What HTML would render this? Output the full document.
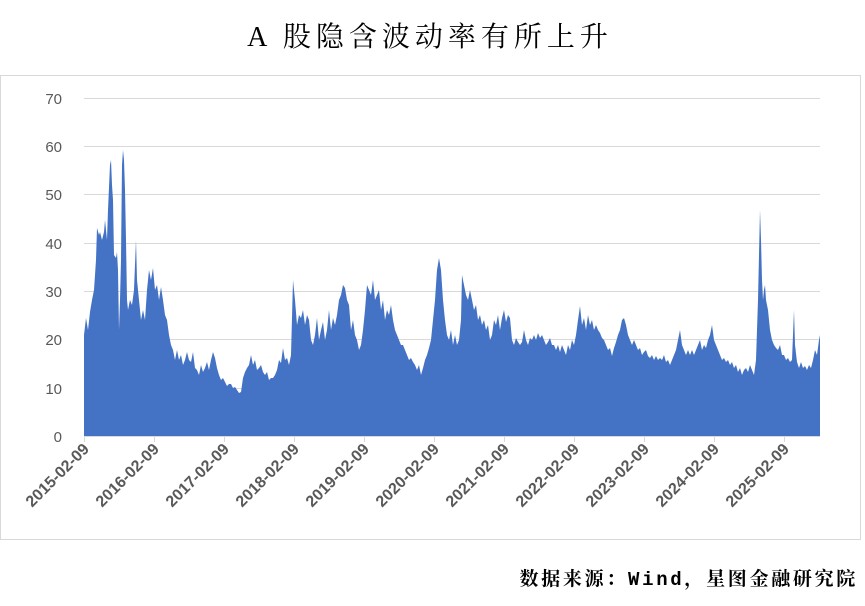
<!DOCTYPE html>
<html><head><meta charset="utf-8"><style>
body{margin:0;width:865px;height:601px;background:#fff;overflow:hidden;font-family:"Liberation Sans","Noto Sans CJK SC",sans-serif;}
</style></head><body>
<svg width="865" height="601" xmlns="http://www.w3.org/2000/svg">
<text x="430" y="46" text-anchor="middle" font-family="Liberation Serif,'Noto Serif CJK SC',serif" font-size="28" fill="#000" letter-spacing="5">A 股隐含波动率有所上升</text>
<rect x="0.5" y="75.5" width="860" height="464" fill="#fff" stroke="#d9d9d9"/>
<g stroke="#d9d9d9" stroke-width="1">
<line x1="84" x2="820" y1="98.5" y2="98.5"/>
<line x1="84" x2="820" y1="146.5" y2="146.5"/>
<line x1="84" x2="820" y1="194.5" y2="194.5"/>
<line x1="84" x2="820" y1="243.5" y2="243.5"/>
<line x1="84" x2="820" y1="291.5" y2="291.5"/>
<line x1="84" x2="820" y1="339.5" y2="339.5"/>
<line x1="84" x2="820" y1="388.5" y2="388.5"/>
<line x1="84" x2="820" y1="436.5" y2="436.5"/>
</g>
<g font-size="15" fill="#595959" text-anchor="end">
<text x="62" y="104">70</text><text x="62" y="152">60</text><text x="62" y="200">50</text><text x="62" y="249">40</text><text x="62" y="297">30</text><text x="62" y="345">20</text><text x="62" y="394">10</text><text x="62" y="442">0</text>
</g>
<path fill="#4472c4" d="M84,436 L84,335 86,318 88,330 90,312 92,300 94,290 96,260 97,228 99,235 100,232 102,240 104,232 105,220 107,240 108,210 110,165 111,160 112,185 113,200 114,255 116,258 117,252 118,270 119,330 120,300 121,260 122,165 123,150 124,160 125,190 126,240 127,300 128,310 130,300 132,305 134,290 136,240 137,280 139,300 141,320 143,310 145,320 147,290 149,270 151,280 153,268 155,290 157,285 159,300 161,287 163,300 165,315 167,320 169,335 171,345 173,350 175,360 177,350 179,360 181,355 183,365 185,360 187,352 189,360 191,362 193,352 195,368 197,370 199,375 201,365 203,372 205,368 207,362 209,370 211,360 213,352 215,358 217,368 219,375 221,380 223,378 225,382 227,386 229,384 231,384 233,388 235,387 237,390 239,393 241,392 243,378 245,372 247,368 249,365 251,355 253,365 255,360 257,370 259,368 261,365 263,372 265,375 267,372 269,380 271,378 273,378 275,375 277,370 279,360 281,363 283,348 285,360 287,358 289,365 291,355 293,280 295,300 297,325 299,315 301,318 303,310 305,325 307,315 309,320 311,340 313,345 315,335 317,318 319,340 321,330 323,322 325,340 327,330 329,310 331,330 333,318 335,325 337,315 339,300 341,295 343,285 345,288 347,300 349,305 351,330 353,320 355,335 357,340 359,350 361,345 363,330 365,310 367,285 369,290 371,295 373,280 375,300 377,295 379,290 381,310 383,300 385,320 387,310 389,315 391,305 393,320 395,330 397,335 399,340 401,345 403,345 405,350 407,355 409,360 411,358 413,362 415,365 417,370 419,365 421,375 423,368 425,360 427,355 429,348 431,340 433,320 435,300 437,270 439,258 441,270 443,300 445,320 447,335 449,340 451,330 453,345 455,335 457,345 459,340 461,320 462,275 464,285 466,295 468,300 470,290 472,300 474,310 476,305 478,320 480,315 482,325 484,320 486,330 488,325 490,340 492,335 494,320 496,325 498,315 500,330 502,318 504,310 506,322 508,315 510,318 512,340 514,345 516,338 518,342 520,345 522,342 524,330 526,340 528,345 530,338 532,340 534,335 536,340 538,333 540,338 542,335 544,340 546,345 548,342 550,338 552,345 554,345 556,350 558,345 560,352 562,345 564,350 566,355 568,345 570,350 572,340 574,345 576,335 578,320 580,306 582,325 584,318 586,330 588,315 590,325 592,320 594,330 596,325 598,330 600,333 602,338 604,340 606,345 608,350 610,348 612,356 614,348 616,342 618,335 620,330 622,320 624,318 626,325 628,335 630,340 632,345 634,340 636,345 638,350 640,348 642,355 644,352 646,350 648,356 650,358 652,355 654,360 656,356 658,360 660,358 662,360 664,355 666,362 668,360 670,365 672,360 674,355 676,350 678,340 680,330 682,345 684,350 686,355 688,350 690,355 692,350 694,355 696,350 698,345 700,340 702,350 704,345 706,348 708,340 710,335 712,325 714,340 716,345 718,350 720,355 722,360 724,358 726,362 728,360 730,365 732,362 734,368 736,365 738,372 740,368 742,375 744,370 746,368 748,372 750,365 752,370 754,375 756,360 758,300 759,255 760,210 761,240 762,280 763,300 764,290 765,285 766,300 768,310 770,330 772,340 774,345 776,348 778,350 780,345 782,355 784,355 786,360 788,358 790,362 792,360 794,310 795,345 797,362 799,368 801,362 803,368 805,366 807,370 809,365 811,368 813,360 815,350 817,355 819,340 820,335 820,436 Z"/>
<g stroke="#d9d9d9"><line x1="84" x2="820" y1="436.5" y2="436.5"/>
<line x1="84.5" x2="84.5" y1="436" y2="442"/><line x1="154.5" x2="154.5" y1="436" y2="442"/><line x1="224.5" x2="224.5" y1="436" y2="442"/><line x1="294.5" x2="294.5" y1="436" y2="442"/><line x1="364.5" x2="364.5" y1="436" y2="442"/><line x1="434.5" x2="434.5" y1="436" y2="442"/><line x1="504.5" x2="504.5" y1="436" y2="442"/><line x1="574.5" x2="574.5" y1="436" y2="442"/><line x1="644.5" x2="644.5" y1="436" y2="442"/><line x1="714.5" x2="714.5" y1="436" y2="442"/><line x1="784.5" x2="784.5" y1="436" y2="442"/>
</g>
<g font-size="16" font-weight="bold" fill="#595959" text-anchor="end">
<text transform="translate(90,450) rotate(-45)">2015-02-09</text>
<text transform="translate(160,450) rotate(-45)">2016-02-09</text>
<text transform="translate(230,450) rotate(-45)">2017-02-09</text>
<text transform="translate(300,450) rotate(-45)">2018-02-09</text>
<text transform="translate(370,450) rotate(-45)">2019-02-09</text>
<text transform="translate(440,450) rotate(-45)">2020-02-09</text>
<text transform="translate(510,450) rotate(-45)">2021-02-09</text>
<text transform="translate(580,450) rotate(-45)">2022-02-09</text>
<text transform="translate(650,450) rotate(-45)">2023-02-09</text>
<text transform="translate(720,450) rotate(-45)">2024-02-09</text>
<text transform="translate(790,450) rotate(-45)">2025-02-09</text>
</g>
<text x="858" y="585" text-anchor="end" font-family="Liberation Mono,'Noto Serif CJK SC',monospace" font-size="19" font-weight="bold" fill="#000" letter-spacing="2.7">数据来源：Wind，星图金融研究院</text>
</svg>
</body></html>
